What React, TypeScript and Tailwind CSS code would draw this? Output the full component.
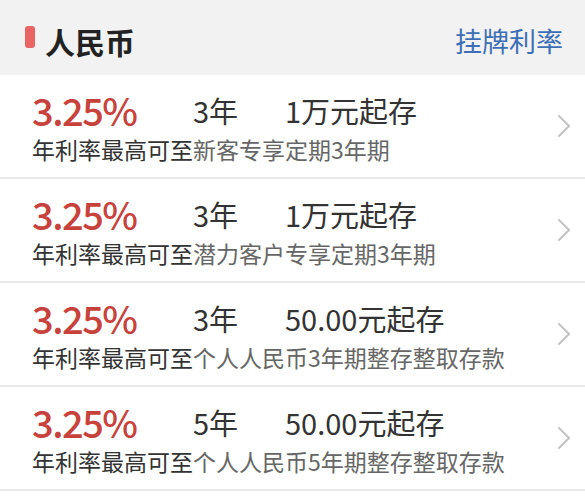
type Rate = {
  rate: string;
  term: string;
  min: string;
  product: string;
};

const rates: Rate[] = [
  { rate: "3.25%", term: "3年", min: "1万元起存", product: "新客专享定期3年期" },
  { rate: "3.25%", term: "3年", min: "1万元起存", product: "潜力客户专享定期3年期" },
  { rate: "3.25%", term: "3年", min: "50.00元起存", product: "个人人民币3年期整存整取存款" },
  { rate: "3.25%", term: "5年", min: "50.00元起存", product: "个人人民币5年期整存整取存款" },
];

function Chevron() {
  return (
    <svg width="16" height="24" viewBox="0 0 16 24" fill="none" className="shrink-0">
      <polyline
        points="3,2 13,12 3,22"
        stroke="#c2c2c2"
        strokeWidth="2"
        strokeLinecap="round"
        strokeLinejoin="round"
      />
    </svg>
  );
}

function RateRow({ item }: { item: Rate }) {
  return (
    <div className="flex h-[104px] items-center border-b-2 border-[#e8e8e8] bg-white pl-8 pr-[13px]">
      <div className="flex flex-1 flex-col">
        <div className="flex h-[42px] items-center text-[29px] leading-[42px] text-[#333]">
          <span className="w-[161px] text-[38px] font-medium leading-[42px] tracking-[-1.5px] text-[#c8423c]">
            {item.rate}
          </span>
          <span className="w-[92px]">{item.term}</span>
          <span>{item.min}</span>
        </div>
        <div className="mt-[3px] text-[23px] leading-[30px] text-[#333]">
          年利率最高可至<span className="text-[#666]">{item.product}</span>
        </div>
      </div>
      <Chevron />
    </div>
  );
}

export default function App() {
  return (
    <div
      className="h-[500px] w-[585px] overflow-hidden bg-white"
      style={{ fontFamily: '"Noto Sans CJK SC", "Noto Sans", sans-serif' }}
    >
      <div className="flex h-[75px] items-center justify-between bg-[#f2f2f2] pl-[25px] pr-[22px] pt-[6px]">
        <div className="flex items-center">
          <div className="mb-[8px] h-[22px] w-[10px] rounded-[3px] bg-[#e96464]" />
          <h1 className="ml-[10px] text-[30px] font-bold leading-none text-[#222]">人民币</h1>
        </div>
        <a href="#" className="text-[27px] leading-none text-[#3d6fb6]">
          挂牌利率
        </a>
      </div>
      {rates.map((item, i) => (
        <RateRow key={i} item={item} />
      ))}
    </div>
  );
}
